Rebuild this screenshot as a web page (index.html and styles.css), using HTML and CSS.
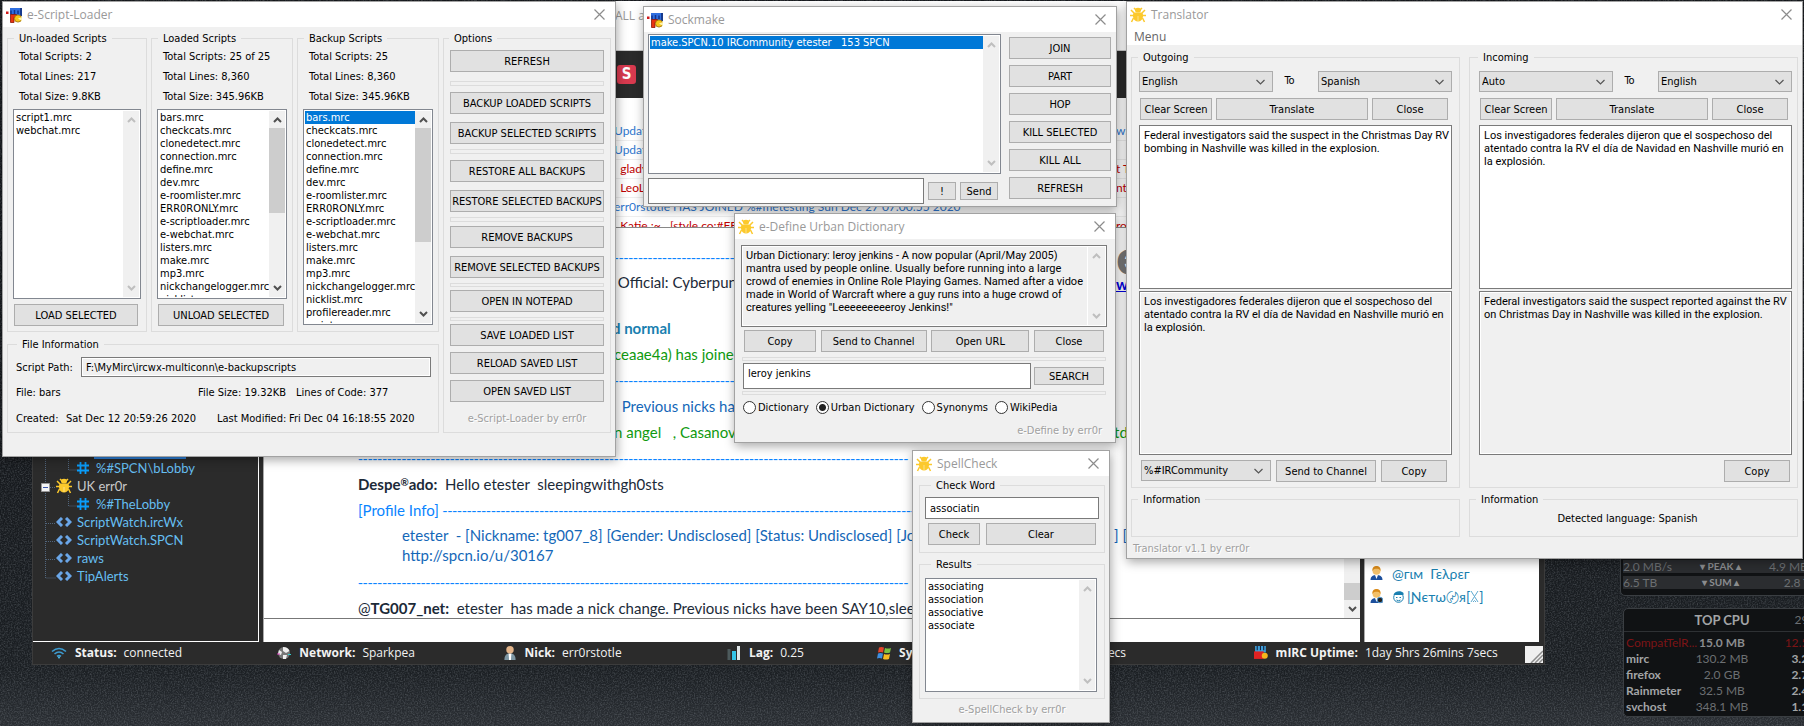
FILE: index.html
```html
<!DOCTYPE html>
<html lang="en">
<head>
<meta charset="utf-8">
<title>Desktop</title>
<link rel="stylesheet" href="styles.css">
</head>
<body>
<svg class="defs" aria-hidden="true">
  <symbol id="bug" viewBox="0 0 16 16">
    <path d="M1 3l3 3M15 3l-3 3M0 8.5h4M16 8.5h-4M1.5 15l2-4M14.5 15l-2-4M4 1l2 2M12 1l-2 2" stroke="currentColor" stroke-width="1.5" fill="none"/>
    <ellipse cx="8" cy="3.2" rx="3" ry="2.4" fill="currentColor"/>
    <path d="M3.5 5.5h9c1.200 3.500.5 9-4.500 9s-5.700-5.500-4.500-9z" fill="currentColor"/>
    <path d="M8 9v5" stroke="#fff" stroke-opacity=".45"/>
  </symbol>
  <symbol id="mirc" viewBox="0 0 16 16">
    <path d="M4 1h11v7H4z" fill="#2f6fe0"/><path d="M15 1v8" stroke="#173a8c" stroke-width="2"/>
    <path d="M5 7V3.500M8.500 7V3M12 7V3.500" stroke="#12348c" stroke-width="1.500"/>
    <path d="M4.500 15.500v-8h6v3H8v5z" fill="#e8330f" stroke="#8a1606" stroke-width=".8"/>
    <circle cx="12" cy="11.500" r="3.600" fill="#f7c81a" stroke="#9a6a00" stroke-width=".8"/>
    <path d="M12 11.500l4-1.500v4z" fill="#fff3b0"/>
    <path d="M0 4.500h2.500v2.500H0z" fill="#d01818"/>
  </symbol>
  <symbol id="x" viewBox="0 0 11 11"><path d="M.5.5l10 10M10.500.5l-10 10" stroke="#8c8c8c" stroke-width="1.200" fill="none"/></symbol>
  <symbol id="up" viewBox="0 0 9 6"><path d="M1 5l3.500-3.500L8 5" stroke="currentColor" stroke-width="2" fill="none"/></symbol>
  <symbol id="down" viewBox="0 0 9 6"><path d="M1 1l3.500 3.500L8 1" stroke="currentColor" stroke-width="2" fill="none"/></symbol>
  <symbol id="chev" viewBox="0 0 9 6"><path d="M.5 1l4 4 4-4" stroke="#555" stroke-width="1.200" fill="none"/></symbol>
  <symbol id="hash" viewBox="0 0 12 12"><path d="M3.500 0v12M8.500 0v12M0 3.500h12M0 8.500h12" stroke="#0a9dfb" stroke-width="1.800"/></symbol>
  <symbol id="code" viewBox="0 0 16 10"><path d="M6 1L2 5l4 4M10 1l4 4-4 4" stroke="#6aa6e8" stroke-width="3" fill="none"/></symbol>
  <symbol id="rail-t" viewBox="0 0 23 18"><path d="M12.500 0v18M13 10.500h10" stroke="#51657c" stroke-dasharray="1 1"/></symbol>
  <symbol id="rail-i" viewBox="0 0 23 18"><path d="M12.500 0v18" stroke="#51657c" stroke-dasharray="1 1"/></symbol>
  <symbol id="rail-l" viewBox="0 0 23 18"><path d="M12.500 0v11h10.500" stroke="#51657c" stroke-dasharray="1 1" fill="none"/></symbol>
  <symbol id="rail-box" viewBox="0 0 23 18"><path d="M12.500 0v18M13 10.500h10" stroke="#51657c" stroke-dasharray="1 1"/><path d="M8.500 6.500h8v8h-8z" fill="#f4f4f4" stroke="#999"/><path d="M10 10.500h5" stroke="#3a53a8"/></symbol>
  <symbol id="person" viewBox="0 0 13 15"><path d="M.5 14c0-4 3-5 6-5s6 1 6 5z" fill="#1c4f9c"/><path d="M5 9h3l-1.500 4z" fill="#fff"/><circle cx="6.500" cy="4.800" r="4" fill="#f3c069"/><path d="M2.500 5C2 1 4.500 0 6.500 0S11 1 10.500 5C9.500 3 8 2.800 6.500 2.800S3.500 3 2.500 5z" fill="#d98a1a"/></symbol>
</svg>

<div class="desktop">
  <svg class="grain" aria-hidden="true"><filter id="n"><feTurbulence type="fractalNoise" baseFrequency=".7" numOctaves="2" seed="4"/><feColorMatrix values="0 0 0 0 .5  0 0 0 0 .55  0 0 0 0 .6  1.400 0 0 0 -.55"/></filter><rect width="100%" height="100%" filter="url(#n)"/></svg>

  <section class="gadget net">
    <div><span>2.0 MB/s</span><b>▾ PEAK ▴</b><span>4.9 MB/s</span></div>
    <div><span>6.5 TB</span><b>▾ SUM ▴</b><span>2.8 TB</span></div>
  </section>
  <section class="gadget cpu">
    <header><span></span><b>TOP CPU</b><span>29%</span></header>
    <table>
      <tr class="hot"><th>CompatTelR...</th><td><b>15.0 MB</b></td><td>12.5%</td></tr>
      <tr><th>mirc</th><td>130.2 MB</td><td>3.2%</td></tr>
      <tr><th>firefox</th><td>2.0 GB</td><td>2.7%</td></tr>
      <tr><th>Rainmeter</th><td>32.5 MB</td><td>2.4%</td></tr>
      <tr><th>svchost</th><td>348.1 MB</td><td>1.1%</td></tr>
    </table>
  </section>

  <main class="irc">
    <header class="irc-title"><span>ALL as</span></header>
    <div class="irc-tools"><span class="tile">S</span></div>
    <div class="irc-body">
      <nav class="tree">
        <div class="sel"></div>
        <a><svg class="rail"><use href="#rail-i"/></svg><svg class="rail"><use href="#rail-l"/></svg><svg class="i12"><use href="#hash"/></svg>%#SPCN\bLobby</a>
        <a class="net-name"><svg class="rail"><use href="#rail-box"/></svg><svg class="i16 gold"><use href="#bug"/></svg>UK err0r</a>
        <a><svg class="rail"><use href="#rail-i"/></svg><svg class="rail"><use href="#rail-l"/></svg><svg class="i12"><use href="#hash"/></svg>%#TheLobby</a>
        <a><svg class="rail"><use href="#rail-t"/></svg><svg class="icode"><use href="#code"/></svg>ScriptWatch.ircWx</a>
        <a><svg class="rail"><use href="#rail-t"/></svg><svg class="icode"><use href="#code"/></svg>ScriptWatch.SPCN</a>
        <a><svg class="rail"><use href="#rail-t"/></svg><svg class="icode"><use href="#code"/></svg>raws</a>
        <a><svg class="rail"><use href="#rail-l"/></svg><svg class="icode"><use href="#code"/></svg>TipAlerts</a>
      </nav>
      <div class="chat">
        <div class="notices">
          <p class="blue"><span>Updated</span><span>w.t</span></p>
          <p class="blue"><span>Updated</span></p>
          <p class="red"><span>&nbsp; glady</span><span>t To</span></p>
          <p class="red"><span>&nbsp; LeoLeo</span><span>nt</span></p>
          <p class="blue"><span>err0rstotle HAS JOINED %#metesting Sun Dec 27 07:00:55 2020</span></p>
          <p class="red"><span>&nbsp; Katie :~ &nbsp; [style co:#FF</span><span>ro</span></p>
        </div>
        <div class="log-wrap">
          <div class="log">
            <p class="dash">------------------------------------------------------------------------------------------------------------------</p>
            <p class="tall late"><span>&nbsp;Official: Cyberpunk</span><span class="badge"><b>e</b><a href="#">www</a></span></p>
            <p class="nick late"><b>d normal</b></p>
            <p class="green late">ceaae4a) has joined</p>
            <p class="dash">------------------------------------------------------------------------------------------------------------------</p>
            <p class="blue late">&nbsp; Previous nicks have</p>
            <p class="green late"><span>n angel &nbsp; , Casanova</span><span class="tail">tdu</span></p>
            <p class="dash">------------------------------------------------------------------------------------------------------------------</p>
            <p><span><b>Despe<sup>®</sup>ado:</b>&nbsp; Hello etester&nbsp; sleepingwithgh0sts</span></p>
            <p class="sky">[Profile Info]&nbsp;<span class="dash">-------------------------------------------------------------------------------------------------------------</span></p>
            <p class="blue info"><span>etester&nbsp; - [Nickname: tg007_8] [Gender: Undisclosed] [Status: Undisclosed] [Joined</span><span class="tail">] [</span></p>
            <p class="blue info last">http://spcn.io/u/30167</p>
            <p class="dash">------------------------------------------------------------------------------------------------------------------</p>
            <p><span>@<b>TG007_net:</b>&nbsp; etester&nbsp; has made a nick change. Previous nicks have been SAY10,sleeping</span></p>
          </div>
          <div class="scroll on low"><i></i><i class="thumb"></i><svg class="arr"><use href="#down"/></svg></div>
        </div>
        <input class="say" aria-label="Message">
      </div>
      <aside class="people">
        <p><svg class="face"><use href="#person"/></svg>@гιм &nbsp;Γελρεг</p>
        <p><svg class="face"><use href="#person"/></svg>@гιм&nbsp; Γελρεг</p>
        <p><svg class="face" viewBox="0 0 13 15"><use href="#person" width="13" height="15"/><circle cx="10" cy="11" r="2.800" fill="#222" stroke="#5aa0d8"/></svg><svg class="santa" viewBox="0 0 13 13"><circle cx="6.500" cy="7.500" r="4.800" fill="none" stroke="#1a7fb0"/><path d="M1.500 5C2 1 9 0 11.500 3v2z" fill="#1a7fb0"/><path d="M4 7.500h1.500M7.500 7.500H9M4.500 10q2 1.500 4 0" stroke="#1a7fb0" fill="none"/></svg>|Ɲєтω<span class="cjk">〄</span>я[<svg class="kno" viewBox="0 0 9 13"><path d="M1 1l7 11M8 1L1 12M3 12q1.500-3 3 0" stroke="#5fa9cf" fill="none"/></svg>]</p>
      </aside>
    </div>
    <footer class="status">
      <div><svg viewBox="0 0 16 12" class="i16"><path d="M1 4.500q7-6 14 0M3.500 7q4.500-4 9 0M6 9.300q2-1.600 4 0" stroke="#3d9bd0" stroke-width="1.600" fill="none"/><path d="M6.500 9.500h3L8 12z" fill="#4fc0f0"/></svg><b>Status:</b>connected</div>
      <div><svg viewBox="0 0 14 14" class="i14"><circle cx="7" cy="7" r="6" fill="#777"/><path d="M6 1q5 0 6.500 4L9 7 6 5zM2 4l3 2-1 3-3-1zM6 9l4 0-1 4H6z" fill="#eee"/><path d="M0 8h3" stroke="#e040c0"/><path d="M11 8.500h3" stroke="#30d0d0"/></svg><b>Network:</b>Sparkpea</div>
      <div><svg viewBox="0 0 12 15" class="i14"><path d="M0 15c0-5 2-7 6-7s6 2 6 7z" fill="#7d96a3"/><path d="M4.500 8h3L7 15H5z" fill="#fff"/><circle cx="6" cy="4" r="4" fill="#e3b489"/></svg><b>Nick:</b>err0rstotle</div>
      <div><svg viewBox="0 0 13 14" class="i14"><path d="M0 3h3v11H0z" fill="#4d5a5c"/><path d="M4.500 5h4v9h-4z" fill="#35c4e8"/><path d="M9.500 0h3v14h-3z" fill="#dfe6e8"/></svg><b>Lag:</b>0.25</div>
      <div class="sys"><svg viewBox="0 0 14 13" class="i14"><path d="M2 1q2-1 5 0L6 6Q4 5 1 6z" fill="#e8452c"/><path d="M8 1.500q3 1 6 0L13 6q-3 1-6 0z" fill="#7cc242"/><path d="M1 7q2-1 5 0l-1 5q-3-1-5 0z" fill="#3f8fe0"/><path d="M7 7.500q3 1 6 0l-1 5q-3 1-6 0z" fill="#f7b921"/></svg><b>System Uptime:</b><span>16secs</span></div>
      <div><svg viewBox="0 0 13 13" class="i14"><path d="M1 0h10v6H1z" fill="#3f9fd8"/><path d="M3 0v4M6 0v4M9 0v4" stroke="#124"/><path d="M0 5h9v7H0z" fill="#e02222"/><circle cx="10" cy="9" r="2.800" fill="#f5b61c"/></svg><b>mIRC Uptime:</b>1day 5hrs 26mins 7secs</div>
      <svg class="grip" viewBox="0 0 18 17"><path d="M0 0h18v17H0z" fill="#f0f0f0"/><path d="M18 5L6 17M18 9l-8 8M18 13l-4 4" stroke="#8c8c8c" stroke-width="1.500"/></svg>
    </footer>
  </main>

  <section class="win loader">
    <header class="bar"><svg class="i16"><use href="#mirc"/></svg><h2>e-Script-Loader</h2><button class="close" aria-label="Close"><svg><use href="#x"/></svg></button></header>
    <div class="loader-body">
      <fieldset class="pane g1"><legend>Un-loaded Scripts</legend>
        <p>Total Scripts: 2</p><p>Total Lines: 217</p><p>Total Size: 9.8KB</p>
        <div class="listbox"><ul><li>script1.mrc</li><li>webchat.mrc</li></ul><div class="scroll"><svg class="arr"><use href="#up"/></svg><svg class="arr"><use href="#down"/></svg></div></div>
        <button class="btn">LOAD SELECTED</button></fieldset>
      <fieldset class="pane g2"><legend>Loaded Scripts</legend>
        <p>Total Scripts: 25 of 25</p><p>Total Lines: 8,360</p><p>Total Size: 345.96KB</p>
        <div class="listbox"><ul><li>bars.mrc</li><li>checkcats.mrc</li><li>clonedetect.mrc</li><li>connection.mrc</li><li>define.mrc</li><li>dev.mrc</li><li>e-roomlister.mrc</li><li>ERR0RONLY.mrc</li><li>e-scriptloader.mrc</li><li>e-webchat.mrc</li><li>listers.mrc</li><li>make.mrc</li><li>mp3.mrc</li><li>nickchangelogger.mrc</li><li>nicklist.mrc</li></ul><div class="scroll on"><svg class="arr"><use href="#up"/></svg><i class="thumb"></i><svg class="arr"><use href="#down"/></svg></div></div>
        <button class="btn">UNLOAD SELECTED</button></fieldset>
      <fieldset class="pane g3"><legend>Backup Scripts</legend>
        <p>Total Scripts: 25</p><p>Total Lines: 8,360</p><p>Total Size: 345.96KB</p>
        <div class="listbox"><ul><li class="on">bars.mrc</li><li>checkcats.mrc</li><li>clonedetect.mrc</li><li>connection.mrc</li><li>define.mrc</li><li>dev.mrc</li><li>e-roomlister.mrc</li><li>ERR0RONLY.mrc</li><li>e-scriptloader.mrc</li><li>e-webchat.mrc</li><li>listers.mrc</li><li>make.mrc</li><li>mp3.mrc</li><li>nickchangelogger.mrc</li><li>nicklist.mrc</li><li>profilereader.mrc</li><li>scripts.mrc</li></ul><div class="scroll on"><svg class="arr"><use href="#up"/></svg><i class="thumb tallthumb"></i><svg class="arr"><use href="#down"/></svg></div></div></fieldset>
      <fieldset class="g4"><legend>File Information</legend>
        <div class="path"><label for="path">Script Path:</label><input id="path" class="field" readonly value="F:\MyMirc\ircwx-multiconn\e-backupscripts"></div>
        <div class="facts one"><span>File: bars</span><span>File Size: 19.32KB</span><span>Lines of Code: 377</span></div>
        <div class="facts two"><span>Created:</span><span>Sat Dec 12 20:59:26 2020</span><span>Last Modified:</span><span>Fri Dec 04 16:18:55 2020</span></div></fieldset>
      <fieldset class="g5"><legend>Options</legend>
        <button class="btn">REFRESH</button><hr class="first">
        <button class="btn">BACKUP LOADED SCRIPTS</button><button class="btn">BACKUP SELECTED SCRIPTS</button><hr>
        <button class="btn">RESTORE ALL BACKUPS</button><button class="btn">RESTORE SELECTED BACKUPS</button><hr class="near">
        <button class="btn">REMOVE BACKUPS</button><button class="btn">REMOVE SELECTED BACKUPS</button><hr class="thin">
        <button class="btn">OPEN IN NOTEPAD</button><hr class="thin">
        <button class="btn">SAVE LOADED LIST</button><button class="btn snug">RELOAD SAVED LIST</button><button class="btn snug">OPEN SAVED LIST</button>
        <p class="credit">e-Script-Loader by err0r</p></fieldset>
    </div>
  </section>

  <section class="win sock">
    <header class="bar"><svg class="i16"><use href="#mirc"/></svg><h2>Sockmake</h2><button class="close" aria-label="Close"><svg><use href="#x"/></svg></button></header>
    <div class="sock-body">
      <div class="sock-left">
        <div class="listbox"><ul><li class="on">make.SPCN.10 IRCommunity etester&nbsp;&nbsp; 153 SPCN</li></ul><div class="scroll"><svg class="arr"><use href="#up"/></svg><svg class="arr"><use href="#down"/></svg></div></div>
        <div class="send"><input class="field" aria-label="Command"><button class="btn bang">!</button><button class="btn">Send</button></div>
      </div>
      <div class="stack"><button class="btn">JOIN</button><button class="btn">PART</button><button class="btn">HOP</button><button class="btn">KILL SELECTED</button><button class="btn">KILL ALL</button><button class="btn">REFRESH</button></div>
    </div>
  </section>

  <section class="win define">
    <header class="bar"><svg class="i16 gold"><use href="#bug"/></svg><h2>e-Define Urban Dictionary</h2><button class="close" aria-label="Close"><svg><use href="#x"/></svg></button></header>
    <div class="define-body">
      <div class="reader"><textarea readonly aria-label="Definition">Urban Dictionary: leroy jenkins - A now popular (April/May 2005)
mantra used by people online. Usually before running into a large
crowd of enemies in Online Role Playing Games. Named after a vidoe
made in World of Warcraft where a guy runs into a huge crowd of
creatures yelling "Leeeeeeeeeroy Jenkins!"</textarea><div class="scroll"><svg class="arr"><use href="#up"/></svg><svg class="arr"><use href="#down"/></svg></div></div>
      <div class="acts"><button class="btn">Copy</button><button class="btn">Send to Channel</button><button class="btn">Open URL</button><button class="btn">Close</button></div>
      <hr class="thin">
      <div class="find"><input class="field" aria-label="Term" value="leroy jenkins"><button class="btn">SEARCH</button></div>
      <hr class="thin">
      <div class="radios"><label><input type="radio" name="src">Dictionary</label><label><input type="radio" name="src" checked>Urban Dictionary</label><label><input type="radio" name="src">Synonyms</label><label><input type="radio" name="src">WikiPedia</label></div>
      <p class="credit">e-Define by err0r</p>
    </div>
  </section>

  <section class="win spell">
    <header class="bar"><svg class="i16 gold"><use href="#bug"/></svg><h2>SpellCheck</h2><button class="close" aria-label="Close"><svg><use href="#x"/></svg></button></header>
    <div class="spell-body">
      <fieldset class="word"><legend>Check Word</legend><input class="field" aria-label="Word" value="associatin"><div class="acts"><button class="btn">Check</button><button class="btn">Clear</button></div></fieldset>
      <fieldset class="results"><legend>Results</legend>
        <div class="listbox"><ul><li>associating</li><li>association</li><li>associative</li><li>associate</li></ul><div class="scroll"><svg class="arr"><use href="#up"/></svg><svg class="arr"><use href="#down"/></svg></div></div></fieldset>
      <p class="credit">e-SpellCheck by err0r</p>
    </div>
  </section>

  <section class="win trans">
    <header class="bar"><svg class="i16 gold"><use href="#bug"/></svg><h2>Translator</h2><button class="close" aria-label="Close"><svg><use href="#x"/></svg></button></header>
    <div class="menu"><button>Menu</button></div>
    <div class="trans-body">
      <fieldset class="dir"><legend>Outgoing</legend>
        <div class="langs"><span class="combo"><select aria-label="From"><option>English</option></select><svg><use href="#chev"/></svg></span><span>To</span><span class="combo"><select aria-label="To"><option>Spanish</option></select><svg><use href="#chev"/></svg></span></div>
        <div class="acts"><button class="btn">Clear Screen</button><button class="btn">Translate</button><button class="btn">Close</button></div>
        <textarea aria-label="Outgoing text">Federal investigators said the suspect in the Christmas Day RV
bombing in Nashville was killed in the explosion.</textarea>
        <textarea readonly aria-label="Outgoing translation">Los investigadores federales dijeron que el sospechoso del
atentado contra la RV el día de Navidad en Nashville murió en
la explosión.</textarea>
        <div class="out"><span class="combo"><select aria-label="Channel"><option>%#IRCommunity</option></select><svg><use href="#chev"/></svg></span><button class="btn chan">Send to Channel</button><button class="btn">Copy</button></div></fieldset>
      <fieldset class="dir in"><legend>Incoming</legend>
        <div class="langs"><span class="combo"><select aria-label="From"><option>Auto</option></select><svg><use href="#chev"/></svg></span><span>To</span><span class="combo"><select aria-label="To"><option>English</option></select><svg><use href="#chev"/></svg></span></div>
        <div class="acts"><button class="btn">Clear Screen</button><button class="btn">Translate</button><button class="btn">Close</button></div>
        <textarea aria-label="Incoming text">Los investigadores federales dijeron que el sospechoso del
atentado contra la RV el día de Navidad en Nashville murió en
la explosión.</textarea>
        <textarea readonly aria-label="Incoming translation">Federal investigators said the suspect reported against the RV
on Christmas Day in Nashville was killed in the explosion.</textarea>
        <div class="out"><button class="btn">Copy</button></div></fieldset>
      <fieldset class="note"><legend>Information</legend></fieldset>
      <fieldset class="note"><legend>Information</legend><p>Detected language: Spanish</p></fieldset>
    </div>
    <p class="credit">Translator v1.1 by err0r</p>
  </section>
</div>
</body>
</html>
```
FILE: styles.css
```css
* { box-sizing: border-box; }
html, body { height: 100%; margin: 0; }
p, h2, ul { margin: 0; padding: 0; }
ul { list-style: none; }
b { font-weight: 700; }
svg { flex: none; display: block; }
button, input, select, textarea { font: inherit; color: inherit; margin: 0; }
.defs { position: absolute; width: 0; height: 0; }

.desktop { position: relative; height: 100vh; overflow: hidden; background: linear-gradient(#16191d 60%, #1b1f23 92%, #2b2f34); }
.grain { position: absolute; inset: 0; width: 100%; height: 100%; opacity: .35; }
.i16 { width: 16px; height: 16px; }
.i14 { width: 14px; height: 14px; }
.i12 { width: 12px; height: 12px; margin: 0 7px 0 -2px; }
.icode { width: 16px; height: 10px; margin-right: 5px; }
.gold { color: #fcc92c; }

/* Desktop gadgets */
.gadget { position: absolute; right: -17px; width: 198px; font: 12px/16px Lato, sans-serif; color: #6c6f72; border: 1px solid #3a3e42; border-radius: 5px; background: #101214; }
.net { top: 400px; height: 196px; width: 201px; padding: 159px 2px 0; display: grid; align-content: start; gap: 3px; }
.net div { display: grid; grid-template-columns: 1fr auto 1fr; background: #2b2d30; height: 13px; line-height: 13px; }
.net div span:last-child { text-align: right; }
.net b { font-size: 10px; color: #8a8c8e; }
.cpu { top: 608px; padding-bottom: 1px; }
.cpu header { display: grid; grid-template-columns: 1fr auto 1fr; padding: 0 2px; line-height: 22px; border-bottom: 1px solid #2e3134; }
.cpu header b { font-size: 13px; color: #a2a4a6; }
.cpu header span:last-child { text-align: right; }
.cpu table { width: 100%; border-collapse: collapse; margin-top: 3px; table-layout: fixed; }
.cpu th, .cpu td { padding: 0; line-height: 16px; text-align: left; color: #a2a4a6; font-weight: 700; white-space: nowrap; }
.cpu th { padding-left: 2px; }
.cpu td { text-align: center; font-weight: 400; color: #6c6f72; }
.cpu td:last-child { text-align: right; padding-right: 2px; font-weight: 700; color: #a2a4a6; }
.cpu td b { color: #8a8c8e; }
.cpu .hot th, .cpu .hot td:last-child { color: #7c1416; font-weight: 400; }

/* Main chat client */
.irc { position: absolute; left: 32px; right: 259px; top: 1px; height: 664px; display: flex; flex-direction: column; background: #2b2b2b; border: 1px solid #3c3c3c; border-top: 0; color: #1c2a38; font: 15px/20px Lato, sans-serif; }
.irc-title { height: 50px; background: #fff; border-bottom: 1px solid #ccc; padding: 5px 0 0 582px; font: 12px/20px "Open Sans", sans-serif; color: #999; }
.irc-tools { height: 47px; padding: 14px 0 0 584px; }
.tile { display: block; width: 19px; height: 19px; border-radius: 3px; background: #d93a4f; color: #fff; font: 700 15px/19px "DejaVu Sans Condensed", sans-serif; text-align: center; }
.irc-body { flex: 1; min-height: 0; display: grid; grid-template-columns: 226px 1fr 175px; column-gap: 4px; padding-right: 5px; }
.tree { border: 1px solid #fff; border-width: 0 1px 1px 0; padding-bottom: 56px; display: flex; flex-direction: column; justify-content: flex-end; font-size: 13px; color: #66bff2; }
.tree a { display: flex; align-items: center; height: 18px; line-height: 18px; }
.tree .i16 { margin-right: 5px; }
.tree .net-name { color: #c9c9c9; }
.rail { width: 23px; height: 18px; }
.tree .sel { height: 18px; width: 92px; margin-left: 61px; background: #2d7fd8; }
.chat { background: #fff; border-left: 1px solid #aaa; display: flex; flex-direction: column; min-width: 0; min-height: 0; }
.chat p { white-space: nowrap; }
.notices { height: 130px; border-bottom: 1px solid #888; padding: 24px 0 0 350px; overflow: hidden; font-size: 12px; }
.notices p { display: flex; justify-content: space-between; line-height: 18px; border-bottom: 1px solid #eee; }
.notices span:last-child:not(:first-child) { width: 244px; }
.log-wrap { flex: 1; min-height: 0; display: grid; grid-template-columns: 1fr 16px; overflow: hidden; }
.log { min-width: 0; overflow: hidden; padding: 16px 0 0 94px; }
.log p { height: 26px; line-height: 26px; display: flex; justify-content: space-between; }
.log .late { padding-left: 256px; }
.log .tall { height: 48px; line-height: 24px; }
.log .nick { height: 20px; line-height: 20px; color: #1a7fb0; padding-left: 254px; }
.log .nick + p { margin-top: 3px; }
.log sup { font-size: 10px; line-height: 0; vertical-align: 4px; }
.log .sky { justify-content: flex-start; }
.log .info { padding-left: 44px; height: 20px; line-height: 24px; }
.log .info.last { height: 24px; line-height: 20px; margin-top: 2px; }
.dash { font-family: "Open Sans", sans-serif; color: #0a84ff; }
.tail { width: 230px; }
.badge { width: 228px; color: #777; }
.badge b { display: block; font: 700 44px/34px "DejaVu Sans Condensed", sans-serif; margin-top: -28px; }
.badge a { display: block; font-weight: 700; line-height: 16px; color: #00d; }
.blue { color: #1467b8; }
.notices .blue { color: #2f78cf; }
.red { color: #c00000; }
.green { color: #109a10; }
.sky { color: #0a84ff; }
.say { width: 100%; height: 24px; border: 0; border-top: 1px solid #777; background: #fff; }
.people { background: #fff; border-left: 1px solid #aaa; padding: 442px 0 0 5px; color: #1a7fb0; font-size: 14px; font-family: Lato, "Noto Sans", "DejaVu Sans", sans-serif; overflow: hidden; }
.people p { height: 23px; display: flex; align-items: center; white-space: pre; }
.people p:first-child { height: 22px; }
.face { width: 13px; height: 15px; margin-right: 9px; }
.santa { width: 13px; height: 13px; margin-right: 2px; }
.kno { width: 9px; height: 13px; }
.cjk { font-family: "Noto Sans CJK JP", sans-serif; font-size: 13px; }
.status { position: relative; display: grid; grid-template-columns: 226fr 225fr 224fr 150fr 376fr 290fr; align-items: center; height: 22px; padding-left: 18px; color: #f2f2f2; font: 12px/20px "Open Sans", sans-serif; white-space: nowrap; }
.status div { display: flex; align-items: center; gap: 8px; }
.status b { margin-right: -1px; }
.status .sys { width: 249px; }
.status .sys span { margin-left: auto; }
.grip { position: absolute; right: 1px; bottom: 1px; width: 18px; height: 17px; }

/* Dialog windows */
.win { position: absolute; display: flex; flex-direction: column; background: #f0f0f0; border: 1px solid #a2a2a2; color: #000; font: 11px/13px "DejaVu Sans Condensed", Tahoma, sans-serif; box-shadow: 1px 3px 10px rgba(0, 0, 0, .35); }
.bar { display: flex; align-items: center; gap: 5px; height: 25px; padding-left: 3px; background: #fff; }
.bar h2 { flex: 1; font: 12px/16px "Open Sans", sans-serif; color: #999; }
.close { border: 0; background: none; padding: 0 10px; }
.close svg { width: 11px; height: 11px; }
fieldset { margin: 0; padding: 0; border: 1px solid #dcdcdc; min-width: 0; }
legend { margin-left: 6px; padding: 0 5px; height: 13px; }
.btn { height: 22px; padding: 0; border: 1px solid #adadad; background: #e1e1e1; white-space: nowrap; text-align: center; }
.field { height: 22px; border: 1px solid #7a7a7a; background: #fff; padding: 0 4px; min-width: 0; border-radius: 0; }
.field[readonly] { background: #f0f0f0; box-shadow: inset 0 0 0 1px #fff; }
hr { margin: 0; height: 5px; border: 1px solid #dcdcdc; }
hr.thin { height: 4px; }
.credit { color: #a0a0a0; text-shadow: 1px 1px #fff; }
.listbox { display: grid; grid-template-columns: 1fr 16px; border: 1px solid #828790; background: #fff; padding: 1px; }
.listbox ul { overflow: hidden; min-height: 0; min-width: 0; }
.listbox li { height: 13px; padding-left: 1px; white-space: nowrap; }
.listbox li.on { background: #0078d7; color: #fff; }
.scroll { display: flex; flex-direction: column; justify-content: space-between; align-items: center; background: #f0f0f0; color: #bfbfbf; padding: 6px 0; }
.scroll.on { color: #505050; justify-content: flex-start; }
.scroll.on .arr:last-child { margin-top: auto; }
.arr { width: 9px; height: 6px; }
.thumb { width: 100%; height: 85px; margin-top: 5px; background: #cdcdcd; }
.tallthumb { height: 114px; }
.scroll.low i:first-child { flex: 1; }
.scroll.low .thumb { flex: none; height: 17px; margin-bottom: 6px; }
textarea { display: block; resize: none; border: 1px solid #7a7a7a; border-radius: 0; background: #fff; padding: 3px 4px; white-space: pre; overflow: hidden; outline: 0; font: 11px/13px Roboto, sans-serif; }
textarea[readonly] { background: #f0f0f0; box-shadow: inset 0 0 0 1px #fff; }
.combo { position: relative; display: block; }
.combo select { appearance: none; width: 100%; height: 21px; border: 1px solid #adadad; border-radius: 0; background: #e1e1e1; padding: 0 2px; }
.combo svg { position: absolute; right: 8px; top: 8px; width: 9px; height: 6px; pointer-events: none; }

.loader { left: 2px; top: 1px; width: 614px; height: 456px; }
.loader-body { display: grid; grid-template-columns: 140px 142px 142px 168px; grid-template-rows: 300px 95px; gap: 6px 4px; padding: 5px 4px 0; }
.pane { display: grid; grid-template-rows: 20px 20px 21px auto auto; align-content: start; padding: 3px 5px 0; }
.pane legend, .g4 legend { margin-left: 1px; }
.g5 legend, .dir legend { margin-left: -1px; }
.pane p { padding-left: 6px; line-height: 18px; }
.pane .listbox { height: 190px; }
.pane .btn { margin: 5px 3px 0 1px; }
.g3 .listbox { height: 216px; }
.g4 { grid-column: 1 / 4; grid-row: 2; padding: 0 7px 0 8px; }
.g5 { grid-column: 4; grid-row: 1 / 3; padding: 5px 6px 0; display: flex; flex-direction: column; }
.path { display: grid; grid-template-columns: 65px 1fr; align-items: center; margin-top: 6px; }
.path .field { height: 20px; }
.facts { display: grid; margin-top: 9px; }
.one { grid-template-columns: 182px 98px 1fr; }
.two { grid-template-columns: 50px 151px 72px 1fr; margin-top: 13px; white-space: nowrap; }
.g5 .btn { flex: none; margin: 0 0 8px; }
.g5 hr { flex: none; width: 100%; margin: -3px 0 6px; }
.g5 hr.first { margin-top: 1px; }
.g5 hr.near { margin-bottom: 4px; }
.g5 hr.thin { margin-bottom: 3px; }
.g5 .btn:has(+ .snug), .g5 .snug { margin-bottom: 6px; }
.g5 .credit { text-align: center; margin-top: 4px; }

.sock { left: 643px; top: 6px; width: 474px; }
.sock-body { display: grid; grid-template-columns: 1fr 102px; gap: 8px; padding: 2px 5px 2px 4px; }
.sock-left .listbox { height: 140px; }
.send { display: grid; grid-template-columns: 1fr 28px 38px; align-items: center; column-gap: 4px; margin-top: 4px; padding-right: 3px; }
.send .field { height: 26px; }
.send .btn { height: 18px; }
.stack { display: flex; flex-direction: column; gap: 6px; padding-top: 3px; }

.define { left: 734px; top: 213px; width: 382px; }
.define-body { padding: 6px 8px 5px 6px; }
.reader { display: grid; grid-template-columns: 1fr 18px; border: 1px solid #7a7a7a; padding: 1px; background: #fff; height: 82px; }
.reader textarea { border: 0; padding: 2px 3px; box-shadow: none; }
.reader .scroll { border-left: 1px solid #fff; }
.define .acts { display: grid; grid-template-columns: 72px 106px 98px 70px; justify-content: space-between; margin: 3px 3px 5px; }
.define hr { margin: 0 1px; }
.find { display: grid; grid-template-columns: 1fr 70px; gap: 3px; align-items: center; padding: 2px 3px 2px 2px; }
.find .field { height: 26px; padding-bottom: 6px; }
.find .btn { height: 18px; }
.radios { display: flex; gap: 7px; padding: 6px 2px 0; }
.radios label { display: flex; align-items: center; gap: 2px; }
.radios input { appearance: none; width: 13px; height: 13px; border: 1px solid #333; border-radius: 50%; background: #fff; }
.radios input:checked { background: radial-gradient(#222 0 3px, #fff 4px); }
.define .credit { text-align: right; margin-top: 10px; padding-right: 5px; }

.spell { left: 912px; top: 450px; width: 198px; }
.spell-body { padding: 3px 4px 6px 6px; }
.word { padding: 5px 5px 7px; }
.word .field { width: 100%; }
.word .acts { display: grid; grid-template-columns: 52px 110px; gap: 6px; margin: 4px 3px 0; }
.results { margin-top: 5px; padding: 7px 7px 6px 5px; }
.results .listbox { height: 114px; }
.spell .credit { text-align: center; margin-top: 4px; }

.trans { left: 1126px; top: 1px; width: 677px; }
.menu { background: #fff; height: 18px; padding: 2px 0 0 7px; }
.menu button { display: block; border: 0; background: none; padding: 0; font: 12px/16px "Open Sans", sans-serif; color: #666; }
.trans-body { display: grid; grid-template-columns: 1fr 1fr; column-gap: 9px; row-gap: 5px; padding: 6px 4px 0; }
.dir { padding: 7px 7px 5px; }
.dir.in { padding-left: 9px; padding-right: 5px; }
.langs { display: grid; grid-template-columns: 134px 1fr 134px; text-align: center; }
.langs > span:nth-child(2) { padding-top: 3px; padding-right: 12px; }
.dir .acts { display: grid; grid-template-columns: 72px 152px 76px; gap: 4px; margin: 6px 1px 5px; }
.dir textarea { width: 100%; height: 164px; margin-bottom: 2px; }
.dir textarea[readonly] { margin-bottom: 5px; }
.out { display: flex; justify-content: flex-end; gap: 5px; padding: 0 5px 0 2px; }
.in .out { padding-right: 2px; }
.out .combo { width: 130px; }
.out .btn { width: 66px; }
.out .chan { width: 100px; }
.note { height: 44px; }
.note p { text-align: center; padding: 6px 12px 0 0; }
.trans > .credit { padding: 5px 6px 3px; }
```
